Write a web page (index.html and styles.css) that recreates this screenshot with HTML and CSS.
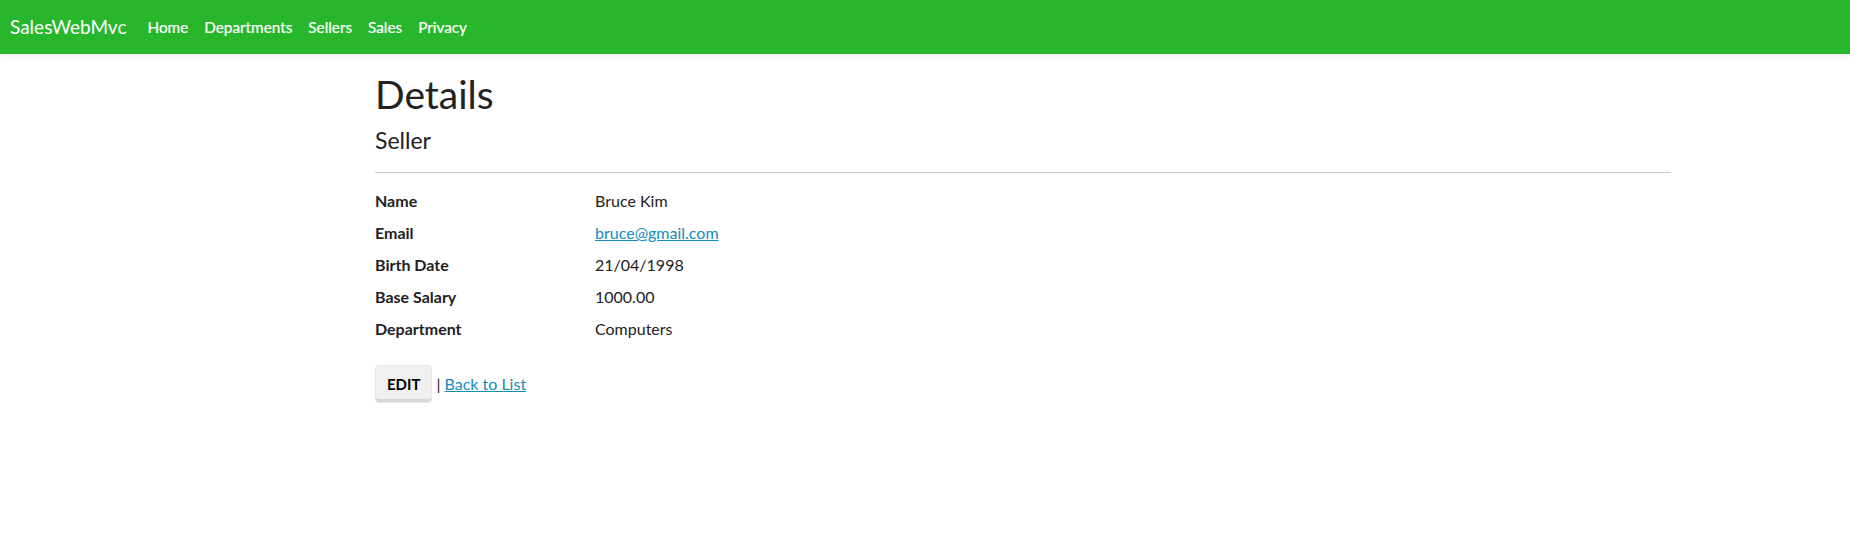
FILE: index.html
```html
<!DOCTYPE html>
<html lang="en">
<head>
<meta charset="utf-8">
<title>Details - SalesWebMvc</title>
<link rel="stylesheet" href="styles.css">
</head>
<body>
<header class="navbar">
  <a class="brand" href="#">SalesWebMvc</a>
  <nav class="nav-links">
    <a href="#">Home</a>
    <a href="#">Departments</a>
    <a href="#">Sellers</a>
    <a href="#">Sales</a>
    <a href="#">Privacy</a>
  </nav>
</header>
<main class="container">
  <h1 class="title">Details</h1>
  <div>
    <h4 class="subtitle">Seller</h4>
    <hr class="divider">
    <dl class="details">
      <dt>Name</dt><dd>Bruce Kim</dd>
      <dt>Email</dt><dd><a href="#">bruce@gmail.com</a></dd>
      <dt>Birth Date</dt><dd>21/04/1998</dd>
      <dt>Base Salary</dt><dd>1000.00</dd>
      <dt>Department</dt><dd>Computers</dd>
    </dl>
  </div>
  <div class="actions">
    <a class="btn" href="#">Edit</a> | <a href="#">Back to List</a>
  </div>
</main>
</body>
</html>
```
FILE: styles.css
```css
* { box-sizing: border-box; }

body {
  margin: 0;
  font-family: Lato, "Noto Sans", sans-serif;
  font-size: 16px;
  line-height: 1.5;
  color: #222;
  background: #fff;
}

a { color: #158cba; }

.navbar {
  display: flex;
  align-items: center;
  height: 54px;
  padding: 0 10px;
  background: #28b62c;
  box-shadow: 0 2px 8px rgba(0, 0, 0, 0.08);
}

.brand {
  color: #fff;
  font-size: 19px;
  text-decoration: none;
  margin-right: 13px;
}

.nav-links {
  display: flex;
}

.nav-links a {
  color: #fff;
  text-decoration: none;
  font-size: 15.3px;
  padding: 0 8px;
  -webkit-text-stroke: 0.2px #fff;
}

.container {
  width: 1296px;
  margin-left: 375px;
  padding-top: 16px;
}

.title {
  font-size: 39px;
  font-weight: 400;
  line-height: 48px;
  margin: 0 0 8px;
}

.subtitle {
  font-size: 23px;
  font-weight: 400;
  line-height: 29px;
  margin: 0 0 8px;
}

.divider {
  border: 0;
  border-top: 1px solid #c8c8c8;
  margin: 17px 0 16px;
}

.details {
  display: grid;
  grid-template-columns: 220px 1fr;
  margin: 0 0 16px;
}

.details dt {
  font-weight: 700;
  margin-bottom: 8px;
}

.details dd {
  margin: 0 0 8px;
}

.actions {
  display: flex;
  align-items: center;
  gap: 4px;
}

.btn {
  display: inline-block;
  padding: 9px 11px;
  font-size: 15px;
  font-weight: 700;
  text-transform: uppercase;
  color: #000;
  text-decoration: none;
  line-height: 18px;
  background: #f0f0f0;
  border: 1px solid #e6e6e6;
  border-radius: 4px;
  box-shadow: inset 0 -3px 0 rgba(0, 0, 0, 0.1);
}
```
